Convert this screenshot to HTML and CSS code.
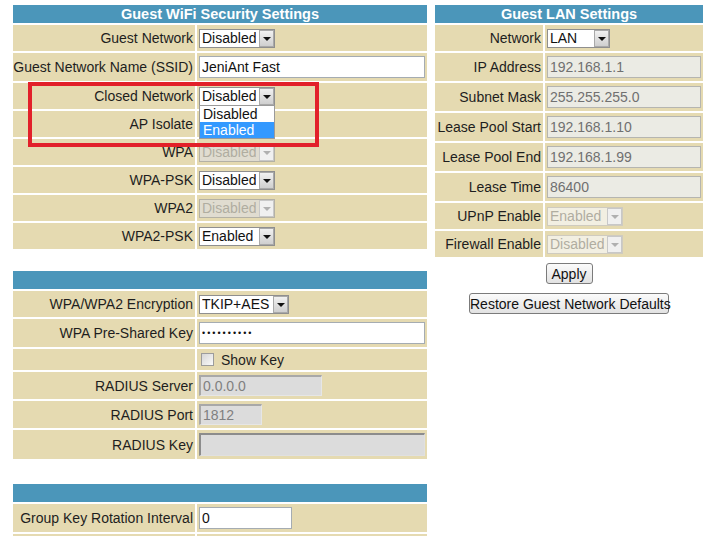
FILE: index.html
```html
<!DOCTYPE html>
<html lang="en">
<head>
  <meta charset="UTF-8" />
  <title>Guest Network</title>
  <link rel="stylesheet" href="styles.css">
</head>
<body>
  <div class="page">
    <div class="left-col">
      <div class="panel panel-wide">
        <div class="head">Guest WiFi Security Settings</div>

        <div class="lbl">Guest Network</div>
        <div class="val">
          <span class="sel w76"><select><option>Disabled</option><option>Enabled</option></select><span class="arr"></span></span>
        </div>

        <div class="lbl tall">Guest Network Name (SSID)</div>
        <div class="val"><input type="text" class="txt w226" value="JeniAnt Fast" /></div>

        <div class="lbl">Closed Network</div>
        <div class="val">
          <span class="sel w76 open">
            <select><option>Disabled</option><option>Enabled</option></select><span class="arr"></span>
            <ul class="droplist">
              <li>Disabled</li>
              <li class="hl">Enabled</li>
            </ul>
          </span>
        </div>

        <div class="lbl">AP Isolate</div>
        <div class="val"></div>

        <div class="lbl">WPA</div>
        <div class="val">
          <span class="sel w76 dis"><select disabled><option>Disabled</option></select><span class="arr"></span></span>
        </div>

        <div class="lbl">WPA-PSK</div>
        <div class="val">
          <span class="sel w76"><select><option>Disabled</option><option>Enabled</option></select><span class="arr"></span></span>
        </div>

        <div class="lbl">WPA2</div>
        <div class="val">
          <span class="sel w76 dis"><select disabled><option>Disabled</option></select><span class="arr"></span></span>
        </div>

        <div class="lbl">WPA2-PSK</div>
        <div class="val">
          <span class="sel w76"><select><option>Enabled</option><option>Disabled</option></select><span class="arr"></span></span>
        </div>
      </div>

      <div class="panel panel-wide gap-top">
        <div class="head"></div>

        <div class="lbl">WPA/WPA2 Encryption</div>
        <div class="val">
          <span class="sel w90"><select><option>TKIP+AES</option><option>AES</option></select><span class="arr"></span></span>
        </div>

        <div class="lbl tall">WPA Pre-Shared Key</div>
        <div class="val"><input type="password" class="txt w226 pw" value="1234567890" /></div>

        <div class="lbl short"></div>
        <div class="val">
          <label class="check"><input type="checkbox" /> Show Key</label>
        </div>

        <div class="lbl mid">RADIUS Server</div>
        <div class="val"><input type="text" class="txt sunk w123" value="0.0.0.0" disabled /></div>

        <div class="lbl mid">RADIUS Port</div>
        <div class="val"><input type="text" class="txt sunk w63" value="1812" disabled /></div>

        <div class="lbl big">RADIUS Key</div>
        <div class="val"><input type="text" class="txt sunk deep w226" value="" disabled /></div>
      </div>

      <div class="panel panel-wide gap-top2">
        <div class="head"></div>

        <div class="lbl tall">Group Key Rotation Interval</div>
        <div class="val"><input type="text" class="txt w93" value="0" /></div>

        <div class="lbl tall"></div>
        <div class="val"></div>
      </div>

      <div class="mark"></div>
    </div>

    <div class="right-col">
      <div class="panel panel-narrow">
        <div class="head">Guest LAN Settings</div>

        <div class="lbl">Network</div>
        <div class="val">
          <span class="sel w63"><select><option>LAN</option></select><span class="arr"></span></span>
        </div>

        <div class="lbl tall">IP Address</div>
        <div class="val"><input type="text" class="txt w154" value="192.168.1.1" disabled /></div>

        <div class="lbl tall">Subnet Mask</div>
        <div class="val"><input type="text" class="txt w154" value="255.255.255.0" disabled /></div>

        <div class="lbl tall">Lease Pool Start</div>
        <div class="val"><input type="text" class="txt w154" value="192.168.1.10" disabled /></div>

        <div class="lbl tall">Lease Pool End</div>
        <div class="val"><input type="text" class="txt w154" value="192.168.1.99" disabled /></div>

        <div class="lbl tall">Lease Time</div>
        <div class="val"><input type="text" class="txt w154" value="86400" disabled /></div>

        <div class="lbl">UPnP Enable</div>
        <div class="val">
          <span class="sel w76 dis light"><select disabled><option>Enabled</option></select><span class="arr"></span></span>
        </div>

        <div class="lbl">Firewall Enable</div>
        <div class="val">
          <span class="sel w76 dis light"><select disabled><option>Disabled</option></select><span class="arr"></span></span>
        </div>
      </div>

      <div class="actions">
        <button type="button" class="btn apply">Apply</button>
        <button type="button" class="btn restore">Restore Guest Network Defaults</button>
      </div>
    </div>
  </div>
</body>
</html>
```

FILE: styles.css
```css
body {
  margin: 0;
  background: #fff;
  font-family: "Liberation Sans", Arial, sans-serif;
  font-size: 14px;
  color: #1e1e1e;
}
.page {
  display: flex;
  gap: 8px;
  padding: 5px 0 0 13px;
}
.left-col {
  position: relative;
  width: 414px;
}
.right-col {
  width: 268px;
}
.panel {
  display: grid;
  gap: 2px;
}
.panel-wide {
  grid-template-columns: 182px 230px;
}
.panel-narrow {
  grid-template-columns: 108px 158px;
}
.gap-top {
  margin-top: 22px;
}
.gap-top2 {
  margin-top: 25px;
}
.head {
  grid-column: 1 / -1;
  height: 18px;
  line-height: 18px;
  background: #4b96ba;
  color: #fff;
  font-size: 14.5px;
  font-weight: bold;
  text-align: center;
}
.lbl, .val {
  background: #e5dab1;
  display: flex;
  align-items: center;
}
.lbl {
  justify-content: flex-end;
  padding-right: 2px;
  height: 26px;
  white-space: nowrap;
}
.lbl.tall { height: 28px; }
.lbl.short { height: 21px; }
.lbl.mid { height: 27px; }
.lbl.big { height: 29px; }
.val {
  padding-left: 2px;
}

/* text fields */
.txt {
  box-sizing: border-box;
  height: 22px;
  margin: 0;
  padding: 0 2px;
  border: 1px solid #a5acb2;
  background: #fff;
  font-family: inherit;
  font-size: 14px;
  color: #111;
  outline: none;
}
.txt:disabled {
  background: #ebebe4;
  color: #707070;
  border-color: #b5b5b0;
}
.txt.sunk {
  height: 21px;
  background: #dcdcdc;
  color: #808080;
  border-width: 2px 1px 1px 2px;
  border-color: #a8a8a8 #e6e6e6 #e6e6e6 #a8a8a8;
}
.txt.deep {
  height: 23px;
  border-color: #8c8c8c #e0e0e0 #e0e0e0 #8c8c8c;
}
.pw {
  font-size: 9px;
  letter-spacing: 2px;
}
.w63 { width: 63px; }
.w76 { width: 76px; }
.w90 { width: 90px; }
.w93 { width: 93px; }
.w123 { width: 123px; }
.w154 { width: 154px; }
.w226 { width: 226px; }

/* drop-down lists */
.sel {
  position: relative;
  display: inline-block;
  height: 19px;
}
.sel select {
  appearance: none;
  -webkit-appearance: none;
  box-sizing: border-box;
  width: 100%;
  height: 19px;
  margin: 0;
  padding: 0 18px 0 2px;
  border: 1px solid #8f8f8f;
  border-radius: 0;
  background: #fff;
  font-family: inherit;
  font-size: 14px;
  color: #111;
}
.sel .arr {
  position: absolute;
  top: 1px;
  right: 1px;
  width: 15px;
  height: 17px;
  box-sizing: border-box;
  border: 1px solid #a9a9a9;
  background: linear-gradient(#f1f1f1, #cfcfcf);
  pointer-events: none;
}
.sel .arr::after {
  content: "";
  position: absolute;
  left: 3px;
  top: 6px;
  border-left: 4px solid transparent;
  border-right: 4px solid transparent;
  border-top: 4px solid #111;
}
.sel.dis select {
  background: #dedede;
  color: #9a9a9a;
  border-color: #a0a0a0;
}
.sel.dis .arr {
  background: #f0f0f0;
  border-color: #c8c8c8;
}
.sel.dis .arr::after {
  border-top-color: #b0b0b0;
}
.sel.light select {
  background: #f8f8f8;
  color: #9a9a9a;
  border-color: #c6c6c6;
}
.droplist {
  position: absolute;
  top: 18px;
  left: 0;
  width: 76px;
  box-sizing: border-box;
  margin: 0;
  padding: 0;
  list-style: none;
  background: #fff;
  border: 1px solid #9a9a9a;
  z-index: 2;
}
.droplist li {
  height: 16px;
  line-height: 16px;
  padding-left: 3px;
  color: #111;
}
.droplist li.hl {
  background: #3399ff;
  color: #fff;
}

/* checkbox */
.check {
  display: flex;
  align-items: center;
  gap: 7px;
  padding-left: 2px;
}
.check input {
  appearance: none;
  -webkit-appearance: none;
  width: 13px;
  height: 13px;
  margin: 0;
  border: 1px solid #9c9c9c;
  background: linear-gradient(135deg, #d6d6d6, #fafafa);
}

/* highlight box */
.mark {
  position: absolute;
  left: 15px;
  top: 77px;
  width: 291px;
  height: 65px;
  box-sizing: border-box;
  border: 4px solid #e2202a;
  pointer-events: none;
  z-index: 3;
}

/* buttons */
.actions {
  display: flex;
  flex-direction: column;
  align-items: center;
}
.btn {
  height: 21px;
  padding: 0;
  border: 1px solid #7b7b7b;
  border-radius: 3px;
  background: linear-gradient(#fbfbfb, #e2e2e2);
  font-family: inherit;
  font-size: 14px;
  color: #111;
  white-space: nowrap;
  cursor: pointer;
}
.apply {
  width: 47px;
  margin-top: 6px;
}
.restore {
  width: 200px;
  margin-top: 9px;
}
```
